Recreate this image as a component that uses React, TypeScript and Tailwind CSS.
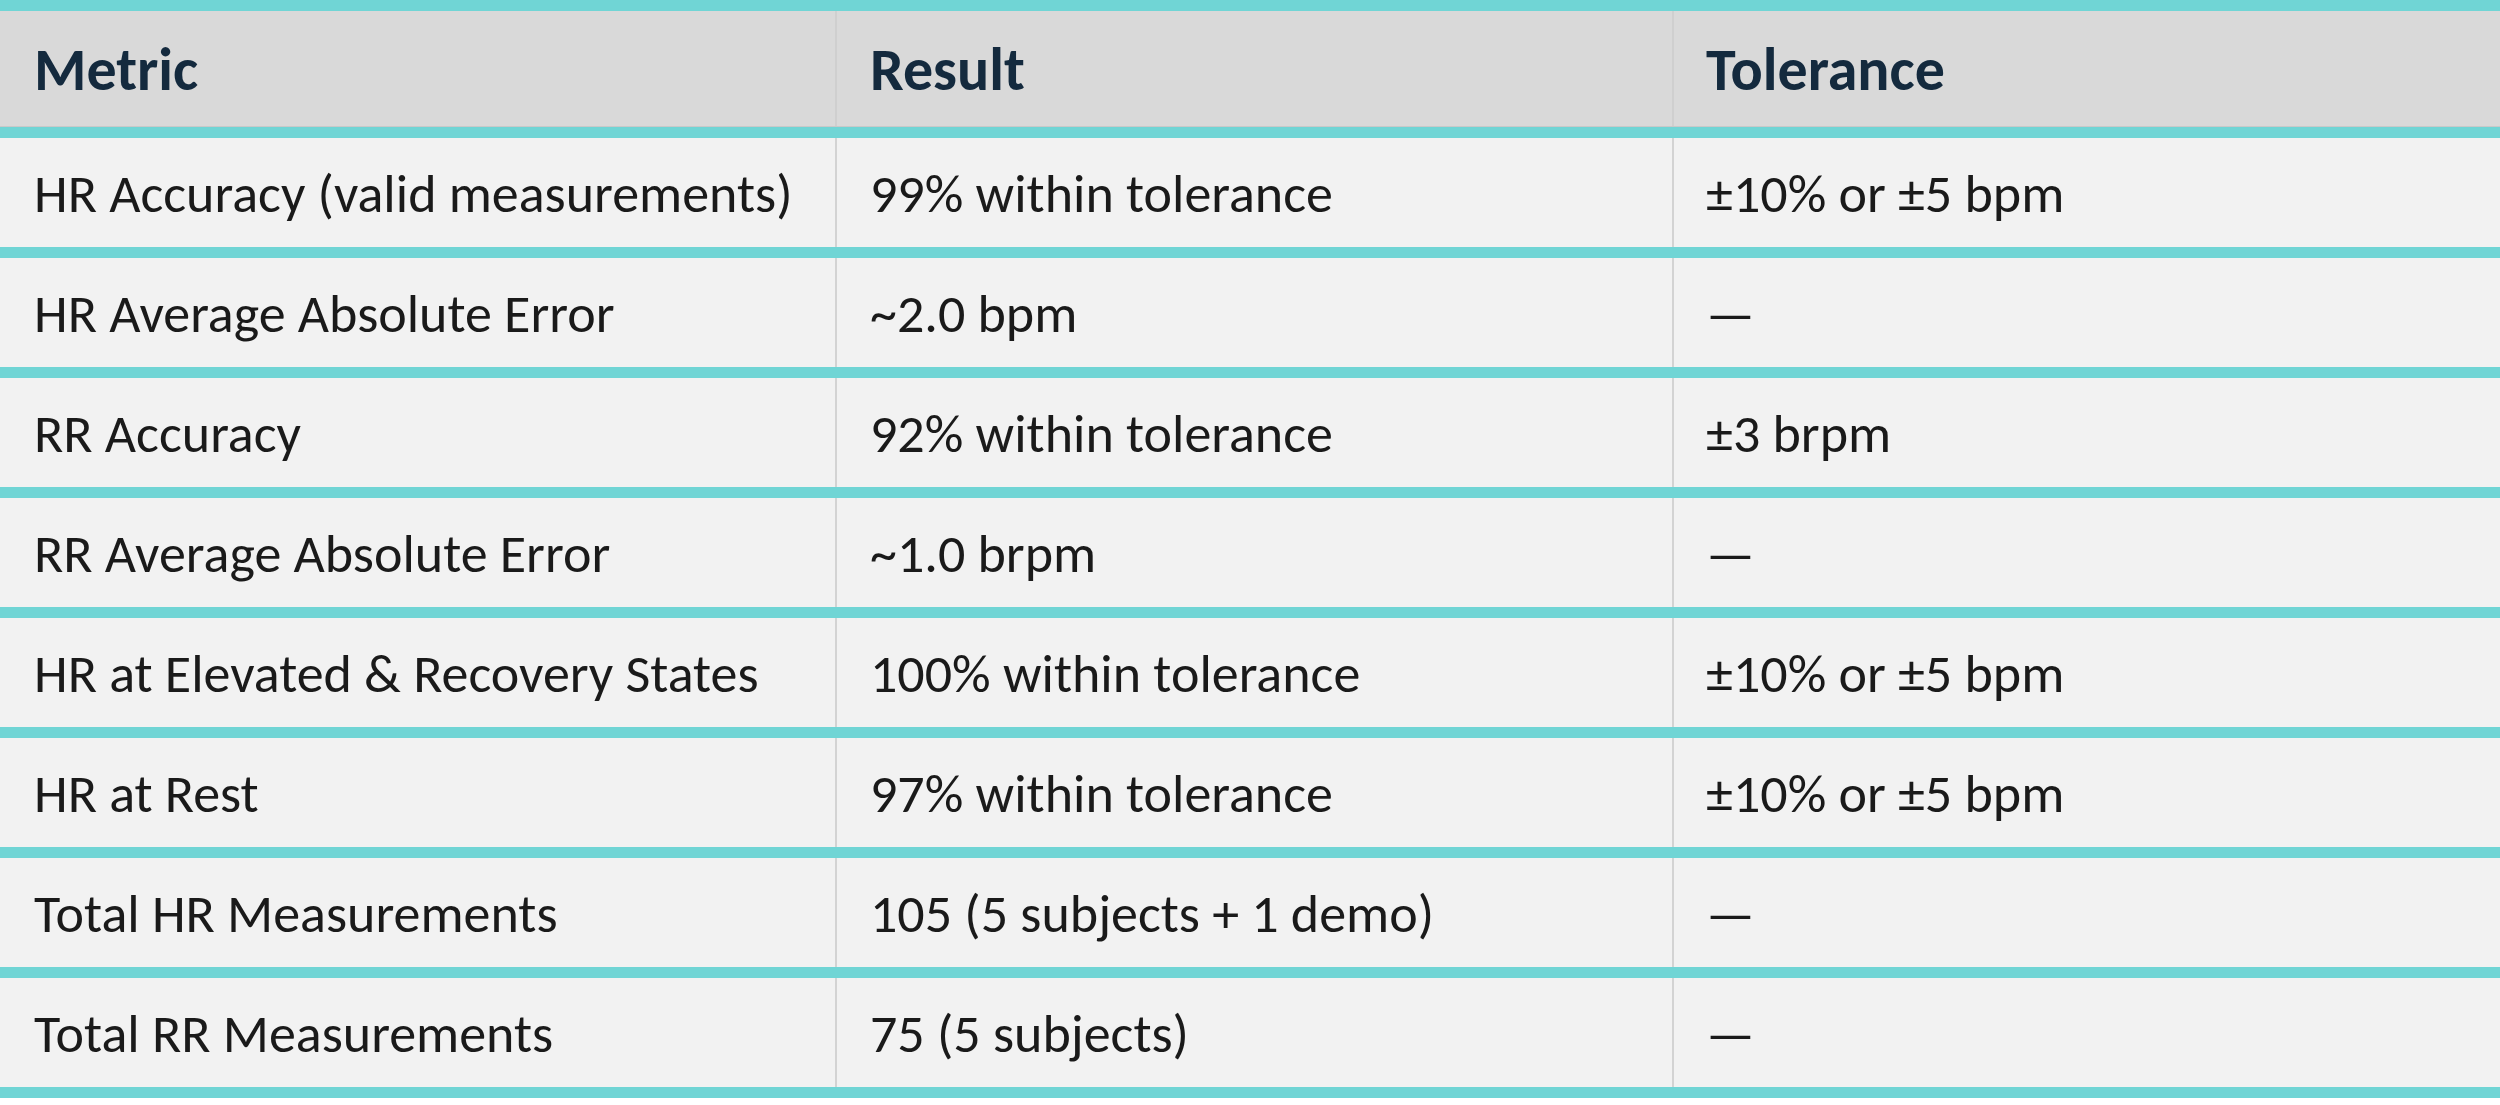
import React from "react";

const rows: [string, string, string][] = [
  ["HR Accuracy (valid measurements)", "99% within tolerance", "±10% or ±5 bpm"],
  ["HR Average Absolute Error", "~2.0 bpm", "—"],
  ["RR Accuracy", "92% within tolerance", "±3 brpm"],
  ["RR Average Absolute Error", "~1.0 brpm", "—"],
  ["HR at Elevated & Recovery States", "100% within tolerance", "±10% or ±5 bpm"],
  ["HR at Rest", "97% within tolerance", "±10% or ±5 bpm"],
  ["Total HR Measurements", "105 (5 subjects + 1 demo)", "—"],
  ["Total RR Measurements", "75 (5 subjects)", "—"],
];

export default function App() {
  return (
    <div
      className="w-[2500px] h-[1105px] bg-white overflow-hidden"
      style={{ fontFamily: 'Carlito, Calibri, Lato, "Open Sans", sans-serif' }}
    >
      <div className="border-t-[11px] border-[#70d5d5]">
        <div className="grid grid-cols-[837px_837px_1fr] h-[116px] bg-[#d9d9d9] border-b border-[#c9c9c9] text-[60px] font-bold text-[#142a3e]">
          <div className="border-r-2 border-[#cfcfcf] pl-[34px] pt-[2px] flex items-center">Metric</div>
          <div className="border-r-2 border-[#cfcfcf] pl-[33px] pt-[2px] flex items-center">Result</div>
          <div className="pl-[32px] pt-[2px] flex items-center">Tolerance</div>
        </div>
        {rows.map((r, i) => (
          <div key={i} className="border-t-[11px] border-[#70d5d5]">
            <div className="grid grid-cols-[837px_837px_1fr] h-[109px] bg-[#f2f2f2] text-[54px] text-[#1a1a1a]">
              <div className="border-r-2 border-[#d3d3d3] pl-[34px] pt-[3px] flex items-center whitespace-nowrap">{r[0]}</div>
              <div className="border-r-2 border-[#d3d3d3] pl-[33px] pt-[3px] flex items-center whitespace-nowrap">{r[1]}</div>
              <div className="pl-[32px] pt-[3px] flex items-center whitespace-nowrap">{r[2]}</div>
            </div>
          </div>
        ))}
        <div className="h-[11px] bg-[#70d5d5]" />
      </div>
    </div>
  );
}
